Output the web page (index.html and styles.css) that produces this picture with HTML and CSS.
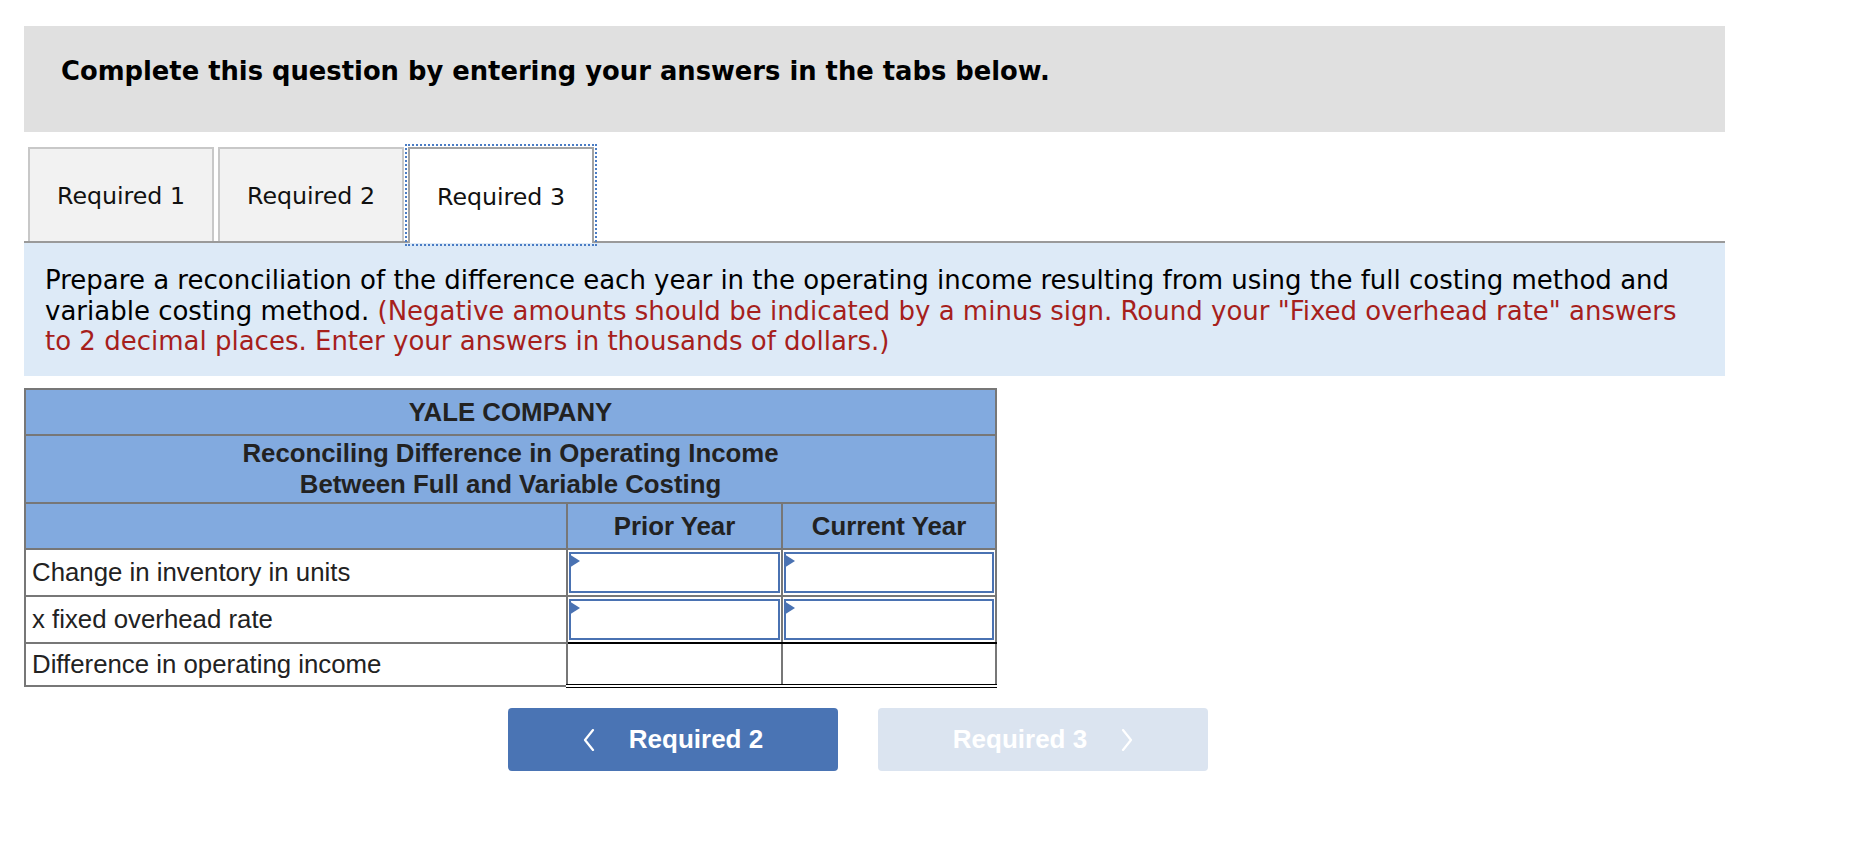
FILE: index.html
```html
<!DOCTYPE html>
<html lang="en">
<head>
<meta charset="utf-8">
<title>Required 3</title>
<link rel="stylesheet" href="styles.css">
</head>
<body>
<div class="page">
  <div class="banner">
    <h1 class="banner-title">Complete this question by entering your answers in the tabs below.</h1>
  </div>

  <div class="tabs">
    <div class="tab">Required 1</div>
    <div class="tab">Required 2</div>
    <div class="tab tab-active">Required 3</div>
  </div>

  <div class="instructions">Prepare a reconciliation of the difference each year in the operating income resulting from using the full costing method and variable costing method. <span class="note">(Negative amounts should be indicated by a minus sign. Round your "Fixed overhead rate" answers to 2 decimal places. Enter your answers in thousands of dollars.)</span></div>

  <table class="recon">
    <colgroup>
      <col class="col-label">
      <col class="col-val">
      <col class="col-val2">
    </colgroup>
    <tr class="head-row">
      <th colspan="3" class="head-cell">YALE COMPANY</th>
    </tr>
    <tr class="head-row-2">
      <th colspan="3" class="head-cell head-multi">Reconciling Difference in Operating Income<br>Between Full and Variable Costing</th>
    </tr>
    <tr class="head-row">
      <th class="head-cell"></th>
      <th class="head-cell">Prior Year</th>
      <th class="head-cell">Current Year</th>
    </tr>
    <tr class="data-row">
      <td class="label-cell">Change in inventory in units</td>
      <td class="input-cell"><div class="answer"></div></td>
      <td class="input-cell"><div class="answer"></div></td>
    </tr>
    <tr class="data-row">
      <td class="label-cell">x fixed overhead rate</td>
      <td class="input-cell input-last"><div class="answer"></div></td>
      <td class="input-cell input-last"><div class="answer"></div></td>
    </tr>
    <tr class="data-row">
      <td class="label-cell label-total">Difference in operating income</td>
      <td class="total-cell"></td>
      <td class="total-cell"></td>
    </tr>
  </table>

  <div class="nav">
    <button class="nav-btn nav-prev" type="button">
      <svg class="chev" width="12" height="22" viewBox="0 0 12 22"><polyline points="10,1 2,11 10,21" fill="none" stroke="#fff" stroke-width="2.2" stroke-linecap="round" stroke-linejoin="round"/></svg>
      <span>Required 2</span>
    </button>
    <button class="nav-btn nav-next" type="button" disabled>
      <span>Required 3</span>
      <svg class="chev" width="12" height="22" viewBox="0 0 12 22"><polyline points="2,1 10,11 2,21" fill="none" stroke="#fff" stroke-width="2.2" stroke-linecap="round" stroke-linejoin="round"/></svg>
    </button>
  </div>
</div>
</body>
</html>
```

FILE: styles.css
```css
html, body {
  margin: 0;
  padding: 0;
  background: #ffffff;
}

.page {
  margin-left: 24px;
  width: 1701px;
  padding-top: 26px;
}

.banner {
  background: #e0e0e0;
  height: 106px;
  box-sizing: border-box;
  padding: 30px 0 0 37px;
}

.banner-title {
  margin: 0;
  font-family: "DejaVu Sans", Verdana, sans-serif;
  font-weight: bold;
  font-size: 25.8px;
  line-height: 30px;
  color: #000;
}

.tabs {
  display: flex;
  align-items: flex-start;
  gap: 4px;
  padding-left: 4px;
  margin-top: 15px;
  border-bottom: 2px solid #9a9a9a;
}

.tab {
  width: 186px;
  height: 94px;
  box-sizing: border-box;
  border: 2px solid #c8c8c8;
  border-bottom: none;
  background: #f2f2f2;
  display: flex;
  align-items: center;
  justify-content: center;
  padding-top: 2px;
  font-family: "DejaVu Sans", Verdana, sans-serif;
  font-size: 23.7px;
  color: #111;
}

.tab-active {
  background: #ffffff;
  border-color: #a3a3a3;
  height: 96px;
  margin-bottom: -2px;
  outline: 2px dotted #4a7cc4;
  outline-offset: 1px;
}

.instructions {
  background: #ddeaf7;
  padding: 22px 30px 19px 21px;
  font-family: "DejaVu Sans", Verdana, sans-serif;
  font-size: 26px;
  line-height: 30.7px;
  color: #000;
}

.note {
  color: #a61f1c;
}

.recon {
  margin-top: 12px;
  border-collapse: collapse;
  width: 971px;
  table-layout: fixed;
  border: 2px solid #777;
  font-family: "Liberation Sans", Arial, sans-serif;
  font-size: 25.8px;
  color: #222;
}

.col-label { width: 542px; }
.col-val { width: 215px; }
.col-val2 { width: 214px; }

.recon th,
.recon td {
  border: 2px solid #777;
  padding: 0;
}

.head-cell {
  background: #82aadf;
  font-weight: bold;
  text-align: center;
  height: 44px;
  line-height: 30px;
}

.head-multi {
  height: 66px;
  line-height: 31px;
}

.label-cell {
  background: #fff;
  height: 43px;
  padding-left: 6px !important;
  text-align: left;
}

.label-total {
  height: 40px;
}

.input-cell {
  background: #fff;
  height: 43px;
  padding: 1px !important;
}

.input-last {
  border-bottom-color: #000 !important;
}

.answer {
  position: relative;
  height: 41px;
  box-sizing: border-box;
  border: 2px solid #4a72b2;
  background: #fff;
}

.answer::before {
  content: "";
  position: absolute;
  left: -2px;
  top: 0;
  border-left: 11px solid #4a72b2;
  border-top: 7px solid transparent;
  border-bottom: 7px solid transparent;
}

.total-cell {
  background: #fff;
  height: 40px;
  border-bottom: 4px double #000 !important;
}

.nav {
  display: flex;
  gap: 40px;
  margin-top: 20px;
  padding-left: 484px;
}

.nav-btn {
  width: 330px;
  height: 63px;
  border: none;
  border-radius: 4px;
  display: flex;
  align-items: center;
  justify-content: center;
  gap: 34px;
  font-family: "Liberation Sans", Arial, sans-serif;
  font-weight: bold;
  font-size: 26px;
  color: #fff;
  padding: 0;
}

.nav-prev {
  background: #4a74b4;
}

.nav-next {
  background: #dbe4f0;
}

.chev {
  display: block;
}
```
